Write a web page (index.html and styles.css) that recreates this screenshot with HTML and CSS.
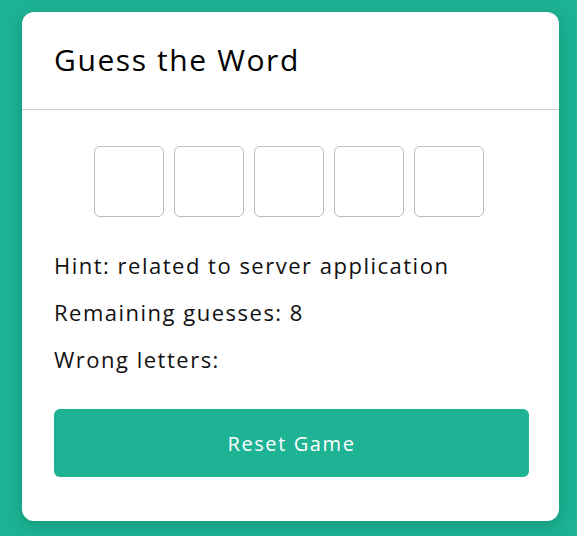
FILE: index.html
```html
<!DOCTYPE html>
<html>
<head>
<meta charset="utf-8">
<link rel="stylesheet" href="styles.css">
</head>
<body>
<div class="card">
  <div class="card-header">
    <h1 class="title">Guess the Word</h1>
  </div>
  <div class="card-body">
    <div class="letters">
      <div class="letter"></div>
      <div class="letter"></div>
      <div class="letter"></div>
      <div class="letter"></div>
      <div class="letter"></div>
    </div>
    <div class="info">
      <p class="line">Hint: related to server application</p>
      <p class="line">Remaining guesses: 8</p>
      <p class="line">Wrong letters:</p>
    </div>
    <button class="reset">Reset Game</button>
  </div>
</div>
</body>
</html>
```

FILE: styles.css
```css
* { box-sizing: border-box; }
html, body { margin: 0; padding: 0; }
body {
  background: #1cb394;
  font-family: "Open Sans", "Noto Sans", sans-serif;
  color: #111;
  width: 577px;
  height: 536px;
  overflow: hidden;
  padding: 12px 18px 0 22px;
}
.card {
  width: 537px;
  height: 509px;
  background: #fff;
  border-radius: 12px;
  box-shadow: 0 4px 16px rgba(0, 60, 40, 0.25);
  display: flex;
  flex-direction: column;
}
.card-header {
  height: 98px;
  border-bottom: 1px solid #cfcfcf;
  display: flex;
  align-items: center;
  padding: 0 32px 2px;
}
.title {
  margin: 0;
  font-size: 30px;
  font-weight: 500;
  color: #000;
  letter-spacing: 1.6px;
}
.card-body {
  padding: 36px 30px 44px 32px;
  display: flex;
  flex-direction: column;
}
.letters {
  display: flex;
  gap: 10px;
  padding-left: 40px;
}
.letter {
  width: 70px;
  height: 71px;
  border: 1px solid #bdbdbd;
  border-radius: 6px;
}
.info {
  padding: 25px 0 26px;
}
.line {
  margin: 0;
  font-size: 22px;
  line-height: 47px;
  color: #111;
  letter-spacing: 1.5px;
}
.reset {
  height: 68px;
  border: none;
  border-radius: 6px;
  background: #1db394;
  color: #fff;
  font-family: inherit;
  font-size: 20px;
  letter-spacing: 1.6px;
  cursor: pointer;
}
```
